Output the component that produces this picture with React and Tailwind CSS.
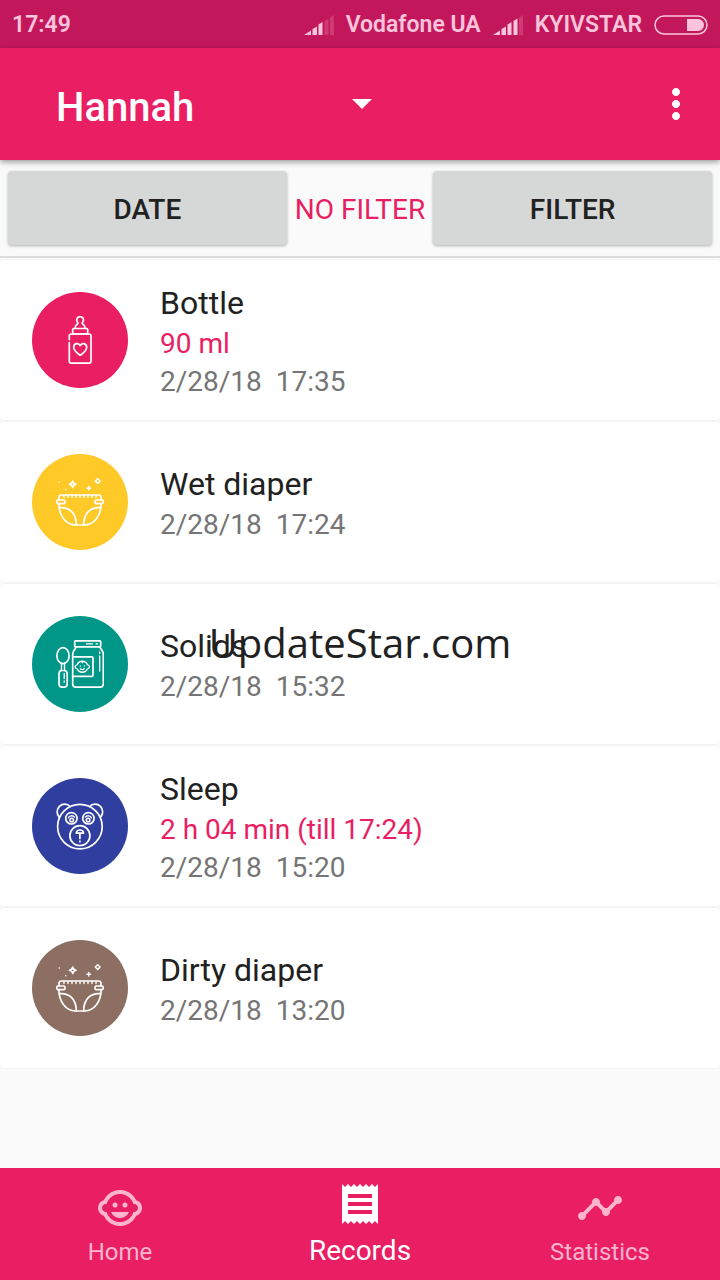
import React from "react";
import { MdChildCare, MdMoreVert, MdReceipt, MdTimeline } from "react-icons/md";

const lineProps = {
  viewBox: "0 0 48 48",
  fill: "none",
  stroke: "currentColor",
  strokeWidth: 1.7,
  strokeLinecap: "round",
  strokeLinejoin: "round",
  className: "h-12 w-12",
  "aria-hidden": true,
};

function BottleIcon() {
  return (
    <svg {...lineProps}>
      <path d="M18.8 12.5c.3-2.4 1.4-3.700 2.600-4.500.8-.5.8-1 .2-1.800-.6-.7-.9-1.400-.9-2.200a3.400 3.400 0 0 1 6.800 0c0 .8-.3 1.500-.9 2.200-.6.8-.6 1.300.2 1.800 1.200.8 2.300 2.100 2.600 4.500" />
      <path d="M17.8 12.5h12.8c.7 0 1.1.4 1.1 1.1V18H16.7v-4.4c0-.7.4-1.1 1.1-1.1Z" />
      <path d="M13.300 23.500V20c0-1.200.8-2 2-2H33c1.200 0 2 .8 2 2v25.200c0 1.200-.8 2-2 2H15.300c-1.200 0-2-.8-2-2V26.500" />
      <path d="M24.200 39.200c-3.600-2.400-6.500-4.900-6.500-8 0-4 5-5 6.500-1.500 1.500-3.500 6.500-2.500 6.500 1.500 0 3.100-2.900 5.600-6.500 8Z" />
    </svg>
  );
}

function DiaperIcon() {
  return (
    <svg {...lineProps}>
      <path d="M3 22v-2.500c0-1.500 1-2.500 2.500-2.500h37c1.500 0 2.500 1 2.500 2.500V22" />
      <path
        d="M8 17.500v2M12 17.500v2M16 17.500v2M20 17.500v2M24 17.500v2M28 17.500v2M32 17.500v2M36 17.500v2M40 17.500v2"
        strokeWidth="1.400"
      />
      <rect x=".9" y="22" width="8" height="3.600" rx="1" />
      <rect x="39.100" y="22" width="8" height="3.600" rx="1" />
      <path d="M2.800 25.600C3 37.500 9.500 47 20 47h8c10.500 0 17-9.500 17.200-21.400" />
      <path d="M3.500 29.700c9.500-.7 16.800 4.800 16.800 17.300M44.500 29.700c-9.500-.7-16.800 4.800-16.800 17.300" />
      <path
        d="M16.700 3c.4 2.200 1.100 2.900 3.300 3.300-2.200.4-2.900 1.100-3.300 3.300-.4-2.200-1.100-2.900-3.300-3.300 2.200-.4 2.900-1.100 3.300-3.300ZM41.700.7 44.100 3l-2.400 2.400L39.300 3Z"
        strokeWidth="1.500"
      />
      <path d="M32.700 8.500v3.600M30.900 10.300h3.600M3.200 4h.1M9.700 11.700h.1" strokeWidth="1.500" />
    </svg>
  );
}

function JarIcon() {
  return (
    <svg {...lineProps}>
      <rect x="18.700" y=".9" width="26" height="6" rx="1" />
      <path d="M20 7c0 2-3.300 3.200-3.300 7v30c0 2 1.200 3.200 3.200 3.200h24.200c2 0 3.200-1.200 3.200-3.200V14c0-3.800-3.300-5-3.300-7" />
      <path d="M30.500 3.900h6M40 3.900h1.500M43.700 12v1.500M43.700 16v15" strokeWidth="1.300" />
      <path d="M16.700 16.800h19.100c.8 0 1.200.4 1.200 1.200v17.200c0 .8-.4 1.200-1.200 1.200H16.700" />
      <path
        d="M26.300 21.300c2.500 0 4.200 1.300 5 3.300 1.300.3 2 1.200 2.300 2.300-.4 1.200-1.200 2-2.300 2.200-.8 2-2.500 3.200-5 3.200s-4.200-1.200-5-3.200c-1.100-.2-1.900-1-2.300-2.200.3-1.100 1-2 2.300-2.300.8-2 2.500-3.300 5-3.300Z"
        strokeWidth="1.400"
      />
      <path d="M24.300 25.800v.4M28.300 25.800v.4M24.300 28.700c1.200 1 2.800 1 4 0M26.300 21.500v1.300" strokeWidth="1.200" />
      <ellipse cx="7" cy="15.700" rx="6.100" ry="8" />
      <path d="M5.500 23.500v3.700c0 1.500-.3 3.300-.3 3.300M8.500 23.500v3.700c0 1.500.3 3.300.3 3.300" strokeWidth="1.400" />
      <rect x="3" y="30.500" width="8.200" height="16.700" rx="3.200" />
      <path d="M8.200 33.500v5M8.200 41v1.200" strokeWidth="1.300" />
    </svg>
  );
}

function BearIcon() {
  return (
    <svg {...lineProps}>
      <circle cx="23.900" cy="24.600" r="22.300" />
      <path d="M3.300 15.200A6.900 6.900 0 1 1 14.200 4.500M44.500 15.200A6.900 6.900 0 1 0 33.600 4.500" />
      <circle cx="15.400" cy="16.300" r="5.700" />
      <circle cx="32.400" cy="16.300" r="5.700" />
      <path d="M12.300 16c.8-2.600 4.500-3 6.300-.8M29.200 15.200c1.800-2.200 5.500-1.800 6.300.8" strokeWidth="1.300" />
      <circle cx="15.700" cy="18" r="1.800" strokeWidth="1.500" />
      <circle cx="32.100" cy="18" r="1.800" strokeWidth="1.500" />
      <circle cx="23.900" cy="33.700" r="10" />
      <path d="M20.300 31.200c.2-4.300 7-4.300 7.200 0ZM23.900 31.500v5M23.900 39.200v.5" />
    </svg>
  );
}

function SignalIcon({ level }) {
  const bars = [
    "M0 20 7 15.500V20Z",
    "M8.500 20v-6L13 11.500V20Z",
    "M14.500 20V9.500L18.500 7v13Z",
    "M20.500 20V6l4-2.500V20Z",
    "M26 20V2.500L30 0v20Z",
  ];

  return (
    <svg viewBox="0 0 30 20" className="h-5 w-[30px]" fill="currentColor" aria-hidden="true">
      {bars.map((d, i) => (
        <path key={d} d={d} opacity={i < level ? 1 : 0.2} />
      ))}
    </svg>
  );
}

// two non-breaking spaces keep the time apart from the date
const records = [
  { id: 1, title: "Bottle", detail: "90 ml", date: "2/28/18\u00a0\u00a017:35", icon: BottleIcon, color: "bg-[#e91e63]" },
  { id: 2, title: "Wet diaper", date: "2/28/18\u00a0\u00a017:24", icon: DiaperIcon, color: "bg-[#ffca28]" },
  { id: 3, title: "Solids", date: "2/28/18\u00a0\u00a015:32", icon: JarIcon, color: "bg-[#009688]" },
  { id: 4, title: "Sleep", detail: "2 h 04 min (till 17:24)", date: "2/28/18\u00a0\u00a015:20", icon: BearIcon, color: "bg-[#303f9f]" },
  { id: 5, title: "Dirty diaper", date: "2/28/18\u00a0\u00a013:20", icon: DiaperIcon, color: "bg-[#8d6e63]" },
];

const tabs = [
  { key: "home", label: "Home", icon: MdChildCare },
  { key: "records", label: "Records", icon: MdReceipt, active: true },
  { key: "statistics", label: "Statistics", icon: MdTimeline },
];

function StatusBar() {
  return (
    <div className="flex h-12 items-center bg-[#c2185b] px-3 pt-0.5 text-[23px] font-semibold text-[#fcc4dc]">
      <span>17:49</span>
      <div className="ml-auto flex items-center gap-3">
        <SignalIcon level={3} />
        <span>Vodafone UA</span>
        <SignalIcon level={4} />
        <span>KYIVSTAR</span>
        <svg viewBox="0 0 54 20" className="h-5 w-[54px]" aria-hidden="true">
          <rect x="1" y="1" width="52" height="18" rx="9" fill="none" stroke="currentColor" strokeWidth="1.500" />
          <path d="M33 4h11a6 6 0 0 1 0 12H33Z" fill="currentColor" />
        </svg>
      </div>
    </div>
  );
}

function FilterButton({ children }) {
  return (
    <button
      type="button"
      className="h-[74px] flex-1 rounded bg-[#d6d7d7] pt-1 font-medium text-[#212121] shadow-[0_1px_3px_rgba(0,0,0,0.3)]"
    >
      {children}
    </button>
  );
}

function RecordRow({ record }) {
  const Icon = record.icon;

  return (
    <li className="flex h-40 items-center gap-8 rounded bg-white px-8 shadow-[0_0_2px_rgba(0,0,0,0.08)]">
      <div className={`flex h-24 w-24 shrink-0 items-center justify-center rounded-full text-white ${record.color}`}>
        <Icon />
      </div>
      <div className="pt-0.5 text-[28px] leading-[38px]">
        <h2 className="text-[32px] leading-[44px] text-[#212121]">{record.title}</h2>
        {record.detail && <p className="text-[#e91e63]">{record.detail}</p>}
        <p className="text-[#757575]">{record.date}</p>
      </div>
    </li>
  );
}

export default function App() {
  return (
    <div className="relative flex min-h-screen flex-col bg-[#fafafa] font-[Roboto,sans-serif]">
      <StatusBar />

      <header className="z-10 flex h-28 items-center justify-between bg-[#e91e63] pr-5 pl-14 text-white shadow-[0_2px_6px_rgba(0,0,0,0.4)]">
        <div className="relative w-80">
          <select
            aria-label="Child"
            className="h-14 w-full appearance-none bg-transparent pt-0.5 text-[40px] font-medium outline-none"
          >
            <option>Hannah</option>
          </select>
          <svg
            viewBox="0 0 20 10"
            className="pointer-events-none absolute top-1/2 right-1 h-2.5 w-5 -translate-y-1/2"
            fill="currentColor"
            aria-hidden="true"
          >
            <path d="M0 0h20L10 10Z" />
          </svg>
        </div>
        <button type="button" aria-label="More options">
          <MdMoreVert className="h-12 w-12" />
        </button>
      </header>

      <div className="flex h-[98px] items-center gap-2 border-b-2 border-[#dcdcdc] px-2 text-[28px]">
        <FilterButton>DATE</FilterButton>
        <span className="pt-1 text-[#e91e63]">NO FILTER</span>
        <FilterButton>FILTER</FilterButton>
      </div>

      <main className="flex-1 pt-0.5">
        <ul className="flex flex-col gap-0.5">
          {records.map((record) => (
            <RecordRow key={record.id} record={record} />
          ))}
        </ul>
      </main>

      <nav className="grid h-28 grid-cols-3 bg-[#e91e63] text-white">
        {tabs.map((tab) => {
          const Icon = tab.icon;

          return (
            <a
              key={tab.key}
              href={`#${tab.key}`}
              aria-current={tab.active ? "page" : undefined}
              className={
                tab.active
                  ? "flex flex-col items-center pt-3 text-[28px] leading-[46px]"
                  : "flex flex-col items-center pt-4 text-2xl leading-10 text-[#fcb4cf]"
              }
            >
              <Icon className="h-12 w-12" />
              <span>{tab.label}</span>
            </a>
          );
        })}
      </nav>

      <div className="pointer-events-none absolute inset-0 z-20 flex items-center justify-center pt-1.5">
        <span className="font-['Open_Sans',sans-serif] text-[40px] text-[#212121]">UpdateStar.com</span>
      </div>
    </div>
  );
}
